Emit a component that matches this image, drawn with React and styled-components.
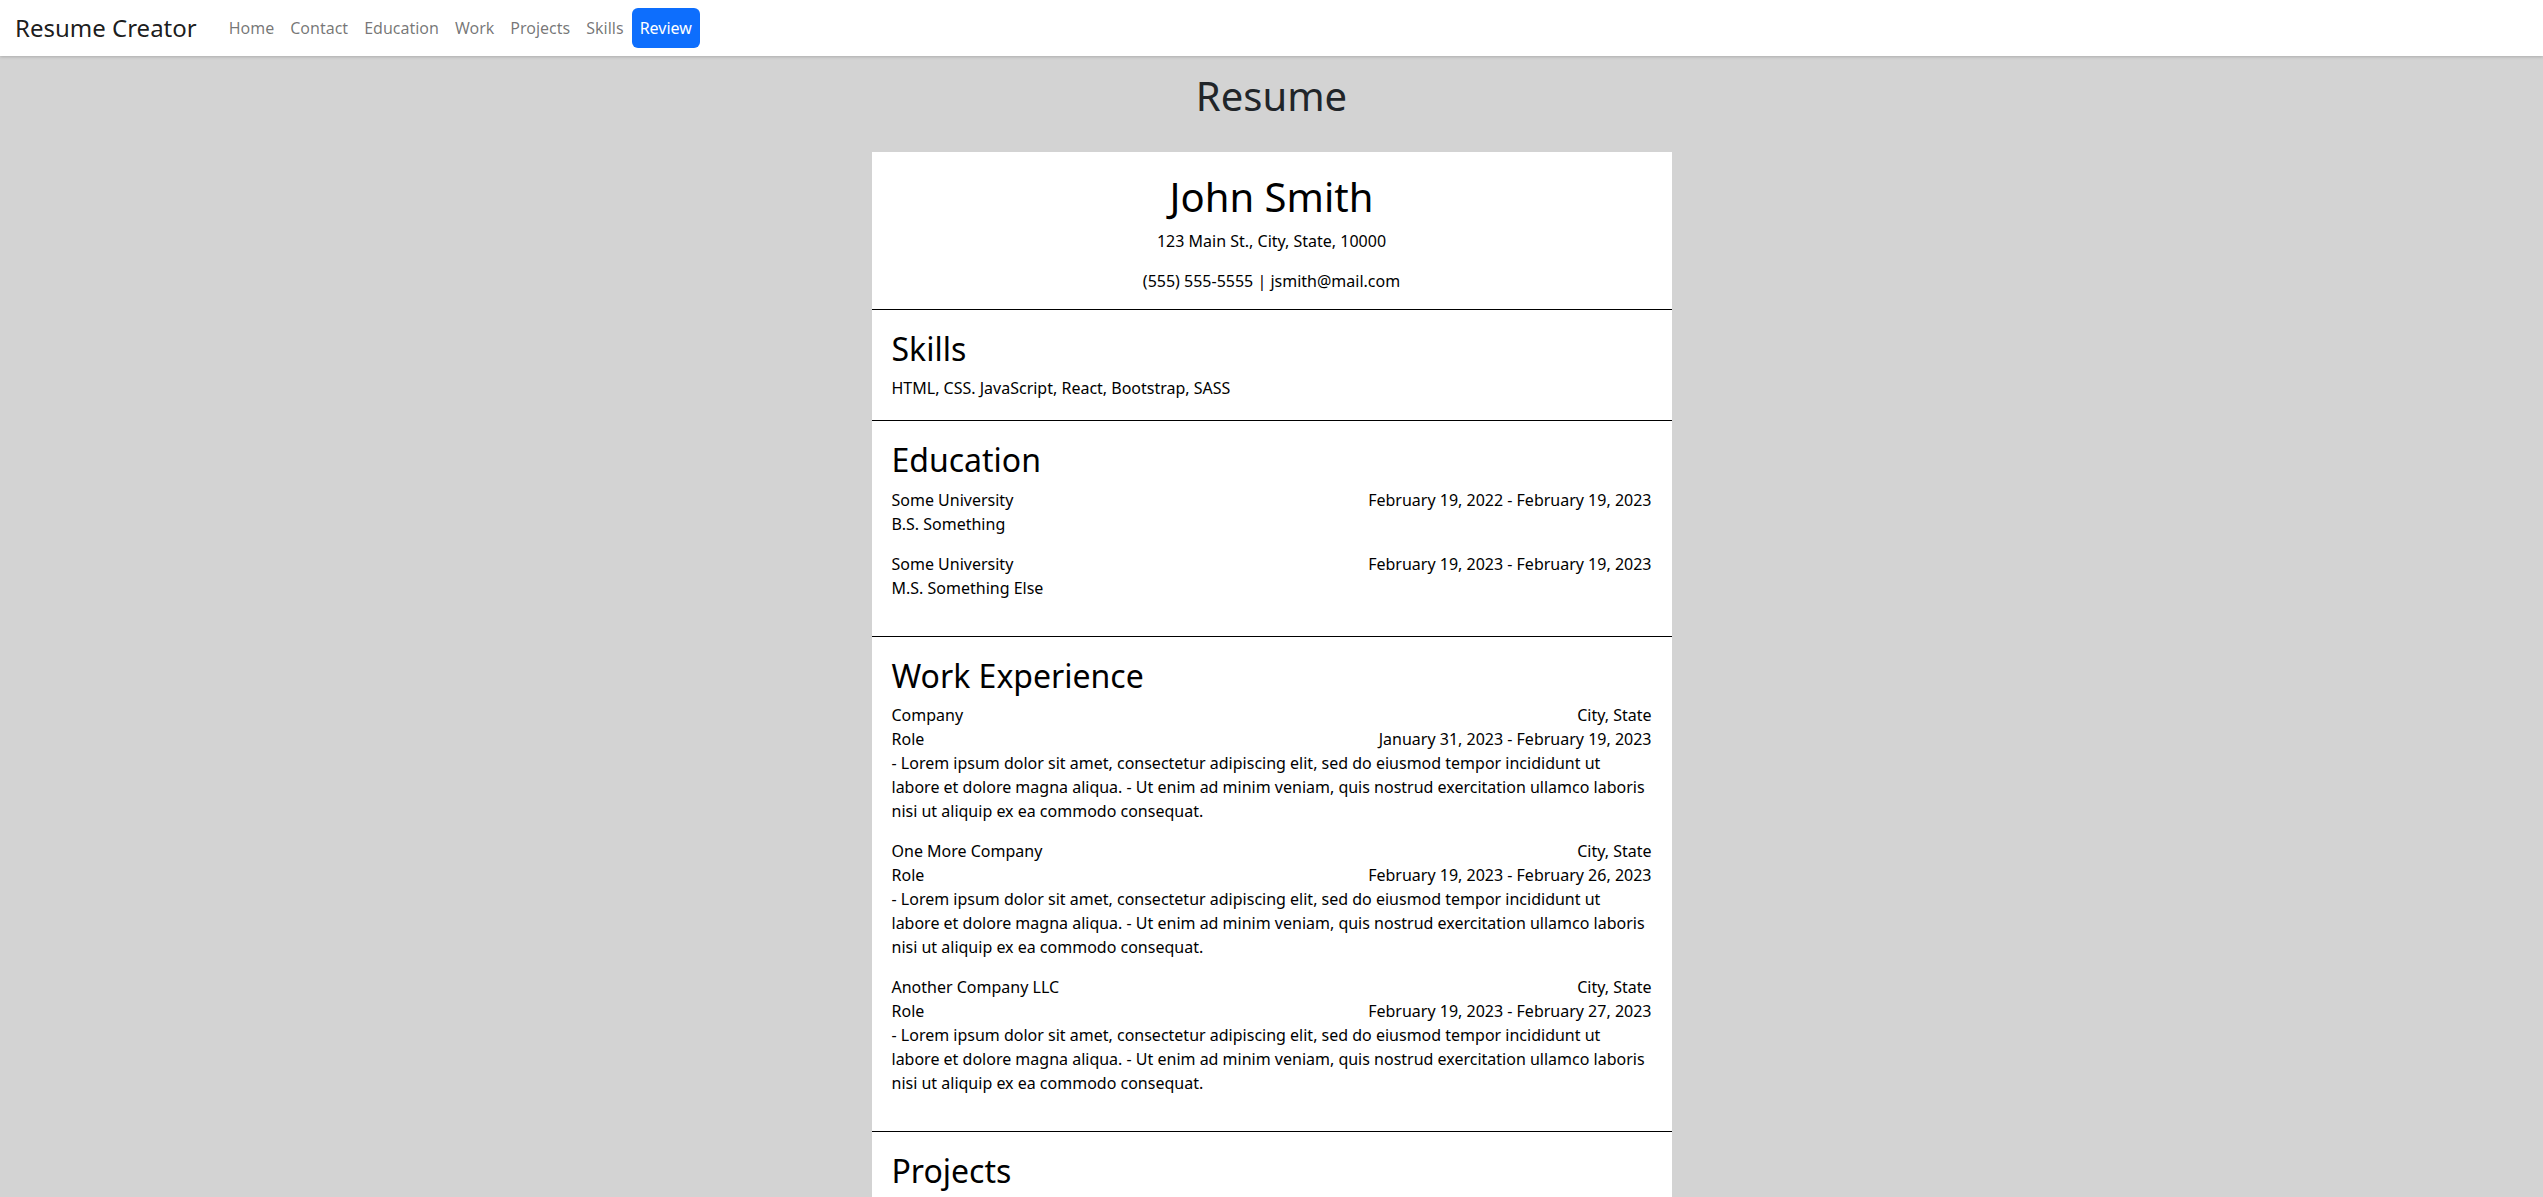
import React from "react";
import styled, { createGlobalStyle } from "styled-components";

const Global = createGlobalStyle`
  *, *::before, *::after { box-sizing: border-box; }
  html, body { margin: 0; padding: 0; }
  body {
    font-family: "Noto Sans", "Open Sans", sans-serif;
    font-size: 16px;
    line-height: 1.5;
    color: #212529;
    background: #d3d3d3;
  }
`;

const Nav = styled.nav`
  background: #fff;
  height: 56px;
  padding: 8px 12px 8px 15px;
  display: flex;
  align-items: center;
  box-shadow: 0 1px 3px rgba(0, 0, 0, 0.18);
  position: relative;
  z-index: 1;
`;

const Brand = styled.a`
  font-size: 24px;
  line-height: 36px;
  color: rgba(0, 0, 0, 0.9);
  margin-right: 24px;
  text-decoration: none;
`;

const NavList = styled.div`
  display: flex;
  align-items: center;
`;

const NavLink = styled.a`
  display: block;
  padding: 8px;
  line-height: 24px;
  border-radius: 6px;
  text-decoration: none;
  color: ${(p) => (p.$active ? "#fff" : "rgba(0,0,0,0.55)")};
  background: ${(p) => (p.$active ? "#0d6efd" : "transparent")};
`;

const Main = styled.main`
  display: flex;
  flex-direction: column;
  align-items: center;
  padding-top: 16px;
`;

const PageTitle = styled.h1`
  margin: 0 0 32px;
  font-size: 40px;
  font-weight: 400;
  line-height: 1.2;
  color: #212529;
`;

const Paper = styled.div`
  width: 800px;
  background: #fff;
  color: #000;
`;

const Section = styled.section`
  padding: ${(p) => (p.$pt === undefined ? 20 : p.$pt)}px 20px
    ${(p) => (p.$pb === undefined ? 20 : p.$pb)}px;
  border-top: ${(p) => (p.$first ? "none" : "1px solid #000")};
  text-align: ${(p) => (p.$center ? "center" : "left")};
`;

const Name = styled.h1`
  margin: 0 0 8px;
  font-size: 40px;
  font-weight: 400;
  line-height: 1.2;
`;

const Heading = styled.h2`
  margin: 0 0 8px;
  font-size: 32px;
  font-weight: 400;
  line-height: 1.2;
`;

const Para = styled.p`
  margin: 0 0 ${(p) => (p.$mb === undefined ? 16 : p.$mb)}px;
`;

const Entry = styled.div`
  margin-bottom: 16px;
`;

const Row = styled.div`
  display: flex;
  justify-content: space-between;
`;

const Body = styled.div``;

const lorem =
  "- Lorem ipsum dolor sit amet, consectetur adipiscing elit, sed do eiusmod tempor incididunt ut labore et dolore magna aliqua. - Ut enim ad minim veniam, quis nostrud exercitation ullamco laboris nisi ut aliquip ex ea commodo consequat.";

const education = [
  { school: "Some University", degree: "B.S. Something", dates: "February 19, 2022 - February 19, 2023" },
  { school: "Some University", degree: "M.S. Something Else", dates: "February 19, 2023 - February 19, 2023" },
];

const work = [
  { company: "Company", dates: "January 31, 2023 - February 19, 2023" },
  { company: "One More Company", dates: "February 19, 2023 - February 26, 2023" },
  { company: "Another Company LLC", dates: "February 19, 2023 - February 27, 2023" },
];

const links = ["Home", "Contact", "Education", "Work", "Projects", "Skills", "Review"];

export default function App() {
  return (
    <>
      <Global />
      <Nav>
        <Brand href="#">Resume Creator</Brand>
        <NavList>
          {links.map((l) => (
            <NavLink key={l} href="#" $active={l === "Review"}>
              {l}
            </NavLink>
          ))}
        </NavList>
      </Nav>
      <Main>
        <PageTitle>Resume</PageTitle>
        <Paper>
          <Section $first $center $pt={21} $pb={0}>
            <Name>John Smith</Name>
            <Para>123 Main St., City, State, 10000</Para>
            <Para>(555) 555-5555 | jsmith@mail.com</Para>
          </Section>
          <Section>
            <Heading>Skills</Heading>
            <Para $mb={0}>HTML, CSS. JavaScript, React, Bootstrap, SASS</Para>
          </Section>
          <Section>
            <Heading>Education</Heading>
            {education.map((e, i) => (
              <Entry key={i}>
                <Row>
                  <span>{e.school}</span>
                  <span>{e.dates}</span>
                </Row>
                <Row>
                  <span>{e.degree}</span>
                </Row>
              </Entry>
            ))}
          </Section>
          <Section>
            <Heading>Work Experience</Heading>
            {work.map((w, i) => (
              <Entry key={i}>
                <Row>
                  <span>{w.company}</span>
                  <span>City, State</span>
                </Row>
                <Row>
                  <span>Role</span>
                  <span>{w.dates}</span>
                </Row>
                <Body>{lorem}</Body>
              </Entry>
            ))}
          </Section>
          <Section>
            <Heading>Projects</Heading>
          </Section>
        </Paper>
      </Main>
    </>
  );
}
